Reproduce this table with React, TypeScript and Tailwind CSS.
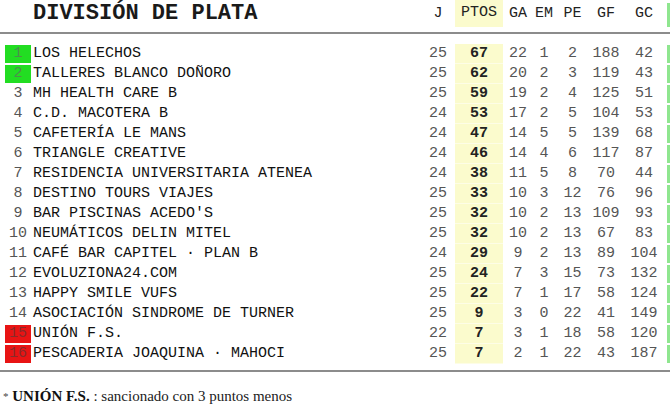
import React from "react";

type Row = [number, string, number, number, number, number, number, number, number];

const rows: Row[] = [
  [1, "LOS HELECHOS", 25, 67, 22, 1, 2, 188, 42],
  [2, "TALLERES BLANCO DOÑORO", 25, 62, 20, 2, 3, 119, 43],
  [3, "MH HEALTH CARE B", 25, 59, 19, 2, 4, 125, 51],
  [4, "C.D. MACOTERA B", 24, 53, 17, 2, 5, 104, 53],
  [5, "CAFETERÍA LE MANS", 24, 47, 14, 5, 5, 139, 68],
  [6, "TRIANGLE CREATIVE", 24, 46, 14, 4, 6, 117, 87],
  [7, "RESIDENCIA UNIVERSITARIA ATENEA", 24, 38, 11, 5, 8, 70, 44],
  [8, "DESTINO TOURS VIAJES", 25, 33, 10, 3, 12, 76, 96],
  [9, "BAR PISCINAS ACEDO'S", 25, 32, 10, 2, 13, 109, 93],
  [10, "NEUMÁTICOS DELIN MITEL", 25, 32, 10, 2, 13, 67, 83],
  [11, "CAFÉ BAR CAPITEL · PLAN B", 24, 29, 9, 2, 13, 89, 104],
  [12, "EVOLUZIONA24.COM", 25, 24, 7, 3, 15, 73, 132],
  [13, "HAPPY SMILE VUFS", 25, 22, 7, 1, 17, 58, 124],
  [14, "ASOCIACIÓN SINDROME DE TURNER", 25, 9, 3, 0, 22, 41, 149],
  [15, "UNIÓN F.S.", 22, 7, 3, 1, 18, 58, 120],
  [16, "PESCADERIA JOAQUINA · MAHOCI", 25, 7, 2, 1, 22, 43, 187],
];

const mono = { fontFamily: '"Liberation Mono", "Courier New", monospace' };

export default function App() {
  return (
    <div className="w-[670px] h-[404px] bg-white overflow-hidden" style={mono}>
      {/* header */}
      <div className="flex h-[32px] items-start">
        <div className="w-[33px]" />
        <div className="flex-1 pt-[1px] text-[22px] leading-[26px] font-bold text-[#1a1a1a]">
          DIVISIÓN DE PLATA
        </div>
        <div className="w-[34px] h-[28px] flex items-center justify-center text-[15px] text-[#222]">J</div>
        <div className="w-[48px] h-[27px] bg-[#fbfbcd] flex items-center justify-center text-[15px] text-[#222]">PTOS</div>
        <div className="w-[30px] h-[28px] flex items-center justify-center text-[15px] text-[#222]">GA</div>
        <div className="w-[22px] h-[28px] flex items-center justify-center text-[15px] text-[#222]">EM</div>
        <div className="w-[35px] h-[28px] flex items-center justify-center text-[15px] text-[#222]">PE</div>
        <div className="w-[32px] h-[28px] flex items-center justify-center text-[15px] text-[#222]">GF</div>
        <div className="w-[44px] h-[28px] flex items-center justify-center text-[15px] text-[#222]">GC</div>
        <div className="w-[1px]" />
        <div className="w-[3px] h-[24px] mt-[3px] bg-[#8fe68f]" />
      </div>
      <div className="h-[2px] bg-[#8c8c8c]" />
      <div className="h-[10px]" />
      {/* rows */}
      <div className="flex flex-col">
        {rows.map((r) => {
          const [pos, name, j, pts, ga, em, pe, gf, gc] = r;
          const box =
            pos <= 2 ? "bg-[#22dd22] text-[#4d8f4d]" : pos >= 15 ? "bg-[#e81414] text-[#8a2a2a]" : "text-[#555]";
          return (
            <div key={pos} className="flex h-[20px] items-center text-[15px] leading-[20px]">
              <div className="w-[5px]" />
              <div className={`w-[26px] h-[18px] flex items-center justify-center ${box}`}>{pos}</div>
              <div className="w-[2px]" />
              <div className="flex-1 text-[#111] whitespace-pre">{name}</div>
              <div className="w-[34px] text-center text-[#555]">{j}</div>
              <div className="w-[48px] h-[20px] bg-[#fbfbcd] border-b border-[#fdfde6] text-center font-bold text-[#222]">
                {pts}
              </div>
              <div className="w-[30px] text-center text-[#555]">{ga}</div>
              <div className="w-[22px] text-center text-[#555]">{em}</div>
              <div className="w-[35px] text-center text-[#555]">{pe}</div>
              <div className="w-[32px] text-center text-[#555]">{gf}</div>
              <div className="w-[44px] text-center text-[#555]">{gc}</div>
              <div className="w-[1px]" />
              <div className="w-[3px] h-[18px] bg-[#8fe68f]" />
            </div>
          );
        })}
      </div>
      <div className="h-[6px]" />
      <div className="h-[2px] bg-[#8c8c8c]" />
      <div
        className="pt-[15px] pl-[3px] text-[15px] leading-[18px] text-[#222]"
        style={{ fontFamily: '"Liberation Serif", "Times New Roman", serif' }}
      >
        <span className="text-[11px] text-[#444] align-top">*</span>{" "}
        <span className="font-bold text-[#111]">UNIÓN F.S.</span> : sancionado con 3 puntos menos
      </div>
    </div>
  );
}
